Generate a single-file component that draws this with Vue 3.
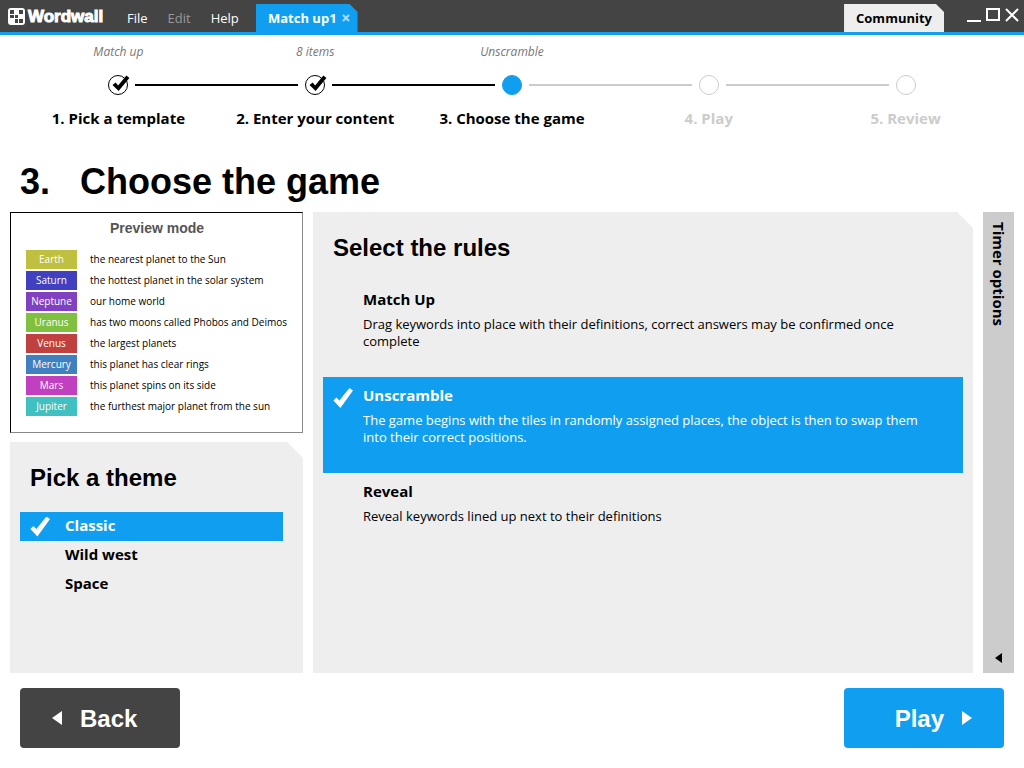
<script setup>
import { ref } from 'vue'

const steps = [
  { title: '1. Pick a template', note: 'Match up', state: 'done' },
  { title: '2. Enter your content', note: '8 items', state: 'done' },
  { title: '3. Choose the game', note: 'Unscramble', state: 'current' },
  { title: '4. Play', note: '', state: 'todo' },
  { title: '5. Review', note: '', state: 'todo' },
]

const pairs = [
  { word: 'Earth', text: 'the nearest planet to the Sun', color: '#c0c040' },
  { word: 'Saturn', text: 'the hottest planet in the solar system', color: '#4040c0' },
  { word: 'Neptune', text: 'our home world', color: '#8040c0' },
  { word: 'Uranus', text: 'has two moons called Phobos and Deimos', color: '#80c040' },
  { word: 'Venus', text: 'the largest planets', color: '#c04040' },
  { word: 'Mercury', text: 'this planet has clear rings', color: '#4080c0' },
  { word: 'Mars', text: 'this planet spins on its side', color: '#c040c0' },
  { word: 'Jupiter', text: 'the furthest major planet from the sun', color: '#40c0c0' },
]

const themes = ['Classic', 'Wild west', 'Space']
const rules = [
  {
    name: 'Match Up',
    text: 'Drag keywords into place with their definitions, correct answers may be confirmed once complete',
  },
  {
    name: 'Unscramble',
    text: 'The game begins with the tiles in randomly assigned places, the object is then to swap them into their correct positions.',
  },
  { name: 'Reveal', text: 'Reveal keywords lined up next to their definitions' },
]

const theme = ref('Classic')
const rule = ref('Unscramble')
</script>

<template>
  <div class="app">
    <header class="titlebar">
      <div class="logo">
        <svg width="17" height="17" viewBox="0 0 17 17" aria-hidden="true">
          <rect width="17" height="17" rx="3" fill="#fff" />
          <path fill="#444" d="M2 2h4v4H2zM11 2h4v4h-4zM2 7h4v3H2zM7 7h3v3H7zM7 11h3v4H7zM11 11h4v4h-4z" />
        </svg>
        <span>Wordwall</span>
      </div>
      <nav class="menu">
        <button type="button">File</button>
        <button type="button" disabled>Edit</button>
        <button type="button">Help</button>
      </nav>
      <div class="tab">
        <span>Match up1</span>
        <button type="button" aria-label="Close tab">
          <svg width="8" height="8" viewBox="0 0 8 8"><path d="M1 1l6 6M7 1l-6 6" /></svg>
        </button>
      </div>
      <button type="button" class="community">Community</button>
      <div class="window">
        <button type="button" aria-label="Minimize">
          <svg width="14" height="16" viewBox="0 0 14 16"><path d="M0 14h14" /></svg>
        </button>
        <button type="button" aria-label="Maximize">
          <svg width="14" height="16" viewBox="0 0 14 16"><path d="M1 2h12v11H1z" /></svg>
        </button>
        <button type="button" aria-label="Close">
          <svg width="14" height="16" viewBox="0 0 14 16"><path d="M1 2l12 12M13 2L1 14" /></svg>
        </button>
      </div>
    </header>

    <ol class="steps">
      <li v-for="s in steps" :key="s.title" :class="s.state">
        <span class="note">{{ s.note }}</span>
        <span class="track">
          <svg width="24" height="24" viewBox="0 0 24 24" aria-hidden="true">
            <circle cx="12" cy="12" r="9.5" />
            <path v-if="s.state === 'done'" d="M6.5 12l3.2-2.6 2.4 3 8.3-10 3 2.5L12.6 18z" />
          </svg>
        </span>
        <span class="name">{{ s.title }}</span>
      </li>
    </ol>

    <h1><span>3.</span><span>Choose the game</span></h1>

    <main>
      <div class="side">
        <section class="preview">
          <h3>Preview mode</h3>
          <ul>
            <li v-for="p in pairs" :key="p.word">
              <span class="chip" :style="{ background: p.color }">{{ p.word }}</span>
              <span>{{ p.text }}</span>
            </li>
          </ul>
        </section>
        <section class="panel themes">
          <h2>Pick a theme</h2>
          <label v-for="t in themes" :key="t" :class="{ on: theme === t }">
            <input v-model="theme" type="radio" name="theme" :value="t" />
            <span>{{ t }}</span>
          </label>
        </section>
      </div>

      <section class="panel rules">
        <h2>Select the rules</h2>
        <label v-for="r in rules" :key="r.name" :class="{ on: rule === r.name }">
          <input v-model="rule" type="radio" name="rule" :value="r.name" />
          <span class="body">
            <strong>{{ r.name }}</strong>
            <span>{{ r.text }}</span>
          </span>
        </label>
      </section>

      <button type="button" class="timer">
        <span>Timer options</span>
        <svg width="7" height="10" viewBox="0 0 7 10" aria-hidden="true"><path d="M7 0v10L0 5z" /></svg>
      </button>
    </main>

    <footer>
      <button type="button" class="back">
        <svg width="10" height="14" viewBox="0 0 10 14" aria-hidden="true"><path d="M10 0v14L0 7z" /></svg>
        <span>Back</span>
      </button>
      <button type="button" class="play">
        <span>Play</span>
        <svg width="10" height="14" viewBox="0 0 10 14" aria-hidden="true"><path d="M0 0v14l10-7z" /></svg>
      </button>
    </footer>
  </div>
</template>

<style>
body {
  margin: 0;
  background: #fff;
}
</style>

<style scoped>
.app {
  --blue: #109ff0;
  --sans: 'Open Sans', 'Noto Sans', sans-serif;
  --head: 'Liberation Sans', Arial, sans-serif;
  display: flex;
  flex-direction: column;
  min-height: 100vh;
  font-family: var(--sans);
  font-size: 13px;
  color: #000;
}
* {
  box-sizing: border-box;
}
button {
  padding: 0;
  border: 0;
  background: none;
  font: inherit;
  color: inherit;
  cursor: pointer;
}
h1,
h2,
h3,
ul,
ol {
  margin: 0;
  padding: 0;
  list-style: none;
}
svg {
  display: block;
  flex: none;
}

.titlebar {
  display: flex;
  align-items: flex-end;
  height: 35px;
  padding-left: 8px;
  background: #444;
  border-bottom: 3px solid var(--blue);
  color: #fff;
}
.logo {
  display: flex;
  align-items: center;
  gap: 3px;
  width: 119px;
  height: 32px;
  font: bold 17px/30px var(--head);
  -webkit-text-stroke: 1px #fff;
}
.logo span {
  padding-top: 2px;
}
.menu {
  display: flex;
  gap: 20px;
  width: 129px;
  line-height: 28px;
}
.menu button:disabled {
  color: #999;
}
.tab {
  display: flex;
  align-items: center;
  gap: 5px;
  height: 28px;
  padding: 0 8px 0 12px;
  background: var(--blue);
  clip-path: polygon(0 0, calc(100% - 8px) 0, 100% 8px, 100% 100%, 0 100%);
  font-weight: bold;
}
.tab path {
  stroke: #a8dafa;
  stroke-width: 2;
}
.community {
  height: 28px;
  margin-left: auto;
  padding: 0 12px;
  background: #eee;
  clip-path: polygon(0 0, calc(100% - 8px) 0, 100% 8px, 100% 100%, 0 100%);
  color: #000;
  font-weight: bold;
}
.window {
  display: flex;
  align-items: center;
  gap: 5px;
  height: 32px;
  padding: 0 5px 2px 23px;
}
.window path {
  fill: none;
  stroke: #fff;
  stroke-width: 2;
}

.steps {
  display: grid;
  grid-template-columns: repeat(5, 1fr);
  padding: 8px 20px 0;
}
.steps li {
  display: flex;
  flex-direction: column;
  text-align: center;
}
.note {
  height: 18px;
  color: #777;
  font-size: 12px;
  font-style: italic;
  line-height: 18px;
}
.track {
  display: flex;
  align-items: center;
  justify-content: center;
  gap: 5px;
  height: 48px;
}
.track::before,
.track::after {
  content: '';
  flex: 1;
  height: 2px;
  background: #ccc;
}
.done .track::before,
.done .track::after,
.current .track::before {
  background: #000;
}
.steps li:first-child .track::before,
.steps li:last-child .track::after {
  background: none;
}
.track circle {
  fill: #fff;
  stroke: #ccc;
}
.done circle {
  stroke: #000;
}
.current circle {
  fill: var(--blue);
  stroke: var(--blue);
}
.name {
  font-size: 15px;
  font-weight: bold;
  line-height: 18px;
}
.todo .name {
  color: #ccc;
}

h1 {
  display: flex;
  padding: 34px 20px 10px;
  font: bold 36px/41px var(--head);
}
h1 span:first-child {
  width: 60px;
}
h2 {
  font: bold 24px/32px var(--head);
}

main {
  flex: 1;
  display: grid;
  grid-template-columns: 293px 1fr 31px;
  gap: 10px;
  padding: 0 10px;
}
.side {
  display: flex;
  flex-direction: column;
  gap: 9px;
}
.preview {
  padding: 6px 14px 15px 15px;
  border: 1px solid #000;
  border-right-color: #888;
  border-bottom-color: #888;
}
.preview h3 {
  margin-bottom: 12px;
  color: #555;
  font: bold 14px/18px var(--head);
  text-align: center;
}
.preview li {
  display: flex;
  align-items: center;
  gap: 13px;
  height: 21px;
  font-size: 10px;
  line-height: 19px;
  white-space: nowrap;
}
.chip {
  width: 51px;
  height: 19px;
  color: #fff;
  text-align: center;
}
.panel {
  background: #eee;
  clip-path: polygon(0 0, calc(100% - 16px) 0, 100% 16px, 100% 100%, 0 100%);
}
.themes {
  flex: 1;
  padding: 20px 20px 20px 10px;
}
.themes h2 {
  padding: 0 10px;
  margin-bottom: 18px;
}
.themes label {
  display: flex;
  align-items: center;
  gap: 15px;
  height: 29px;
  padding-left: 10px;
  font-size: 15px;
  font-weight: bold;
  line-height: 29px;
}
.themes span {
  padding-bottom: 2px;
}
input {
  appearance: none;
  flex: none;
  width: 20px;
  height: 20px;
  margin: 0;
}
input:checked {
  background: #fff;
  clip-path: polygon(2% 62%, 17% 48%, 32% 62%, 82% 0, 100% 12%, 37% 100%);
}
.on {
  background: var(--blue);
  color: #fff;
}
.rules {
  padding: 20px 10px;
}
.rules h2 {
  padding: 0 10px;
  margin-bottom: 17px;
}
.rules label {
  display: flex;
  gap: 10px;
  height: 96px;
  padding: 9px 30px 0 10px;
}
.rules input {
  margin-top: 2px;
}
.rules .body {
  display: flex;
  flex-direction: column;
  gap: 8px;
  line-height: 17px;
}
.rules strong {
  font-size: 15px;
  line-height: 18px;
}
.timer {
  display: flex;
  flex-direction: column;
  align-items: center;
  justify-content: space-between;
  padding: 10px 0;
  background: #ccc;
  font-size: 15px;
  font-weight: bold;
}
.timer span {
  writing-mode: vertical-rl;
}

footer {
  display: flex;
  justify-content: space-between;
  padding: 15px 20px 20px;
}
footer button {
  display: flex;
  align-items: center;
  width: 160px;
  height: 60px;
  border-radius: 4px;
  background: #444;
  color: #fff;
  font: bold 24px/28px var(--head);
}
footer span {
  padding-top: 2px;
}
footer path {
  fill: #fff;
}
.back {
  gap: 18px;
  padding-left: 32px;
}
.play {
  justify-content: flex-end;
  gap: 18px;
  padding-right: 32px;
  background: var(--blue);
}
</style>
